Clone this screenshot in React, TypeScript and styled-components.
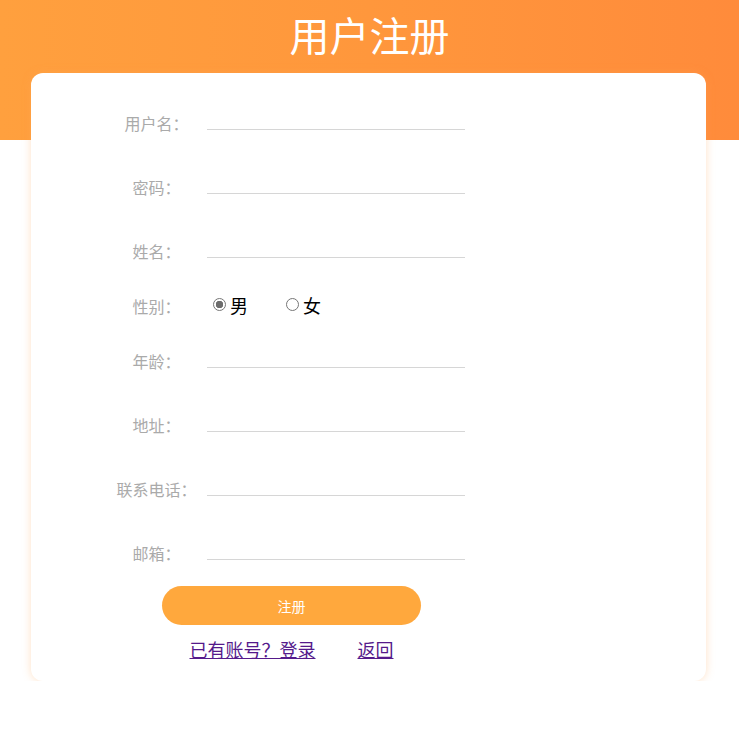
import React, { useState } from "react";
import styled, { createGlobalStyle } from "styled-components";

const GlobalStyle = createGlobalStyle`
  body {
    margin: 0;
    background: #fff;
    font-family: "Noto Sans CJK SC", "Liberation Sans", sans-serif;
  }
`;

const Header = styled.div`
  height: 140px;
  background: linear-gradient(90deg, #ffa03e 0%, #ff973c 50%, #ff8b3b 100%);
  text-align: center;
`;

const Title = styled.h1`
  margin: 0;
  padding-top: 8px;
  font-size: 40px;
  line-height: 52px;
  font-weight: 400;
  color: #fff;
`;

const Card = styled.div`
  position: relative;
  margin: -67px 33px 0 31px;
  padding: 18px 0 20px 75px;
  background: #fff;
  border-radius: 12px;
  box-shadow: 0 0 8px rgba(255, 170, 90, 0.35);
`;

const Row = styled.div<{ $h: number }>`
  display: grid;
  grid-template-columns: 101px 1fr;
  align-items: center;
  height: ${(p) => p.$h}px;
`;

const Label = styled.span`
  text-align: center;
  font-size: 16px;
  color: #aaa;
`;

const LineInput = styled.input`
  width: 258px;
  height: 14px;
  margin-top: -2px;
  padding: 0;
  border: none;
  border-bottom: 1px solid #d6d6d6;
  outline: none;
  font-size: 13px;
  background: transparent;
`;

const Options = styled.div`
  display: flex;
  align-items: center;
  margin-top: -3px;
`;

const Option = styled.label`
  display: flex;
  align-items: center;
  margin-right: 32px;
  font-size: 18px;
  color: #000;
  cursor: pointer;
`;

const Radio = styled.input`
  appearance: none;
  width: 13px;
  height: 13px;
  margin: 0 4px 0 6px;
  border: 1px solid #767676;
  border-radius: 50%;
  box-sizing: border-box;
  background: #fff;
  &:checked {
    background: radial-gradient(circle, #6d6d6d 0 3.5px, #fff 4px);
  }
`;

const SubmitButton = styled.button`
  display: block;
  width: 259px;
  height: 39px;
  margin: 1px 0 0 56px;
  border: none;
  border-radius: 20px;
  background: #ffa83d;
  color: #fff;
  font-family: inherit;
  font-size: 14px;
  cursor: pointer;
`;

const Links = styled.div`
  display: flex;
  justify-content: center;
  gap: 42px;
  width: 259px;
  margin: 12px 0 0 56px;
`;

const Link = styled.a`
  font-size: 18px;
  line-height: 24px;
  color: #551a8b;
  text-decoration: underline;
`;

const fields = [
  { label: "用户名：", type: "text" },
  { label: "密码：", type: "password" },
  { label: "姓名：", type: "text" },
];

const moreFields = [
  { label: "年龄：", type: "text" },
  { label: "地址：", type: "text" },
  { label: "联系电话：", type: "text" },
  { label: "邮箱：", type: "text" },
];

export default function App() {
  const [sex, setSex] = useState("男");

  return (
    <>
      <GlobalStyle />
      <Header>
        <Title>用户注册</Title>
      </Header>
      <Card>
        {fields.map((f) => (
          <Row $h={64} key={f.label}>
            <Label>{f.label}</Label>
            <LineInput type={f.type} />
          </Row>
        ))}
        <Row $h={46}>
          <Label>性别：</Label>
          <Options>
            {["男", "女"].map((s) => (
              <Option key={s}>
                <Radio
                  type="radio"
                  name="sex"
                  checked={sex === s}
                  onChange={() => setSex(s)}
                />
                {s}
              </Option>
            ))}
          </Options>
        </Row>
        {moreFields.map((f) => (
          <Row $h={64} key={f.label}>
            <Label>{f.label}</Label>
            <LineInput type={f.type} />
          </Row>
        ))}
        <SubmitButton>注册</SubmitButton>
        <Links>
          <Link href="#">已有账号？登录</Link>
          <Link href="#">返回</Link>
        </Links>
      </Card>
    </>
  );
}
